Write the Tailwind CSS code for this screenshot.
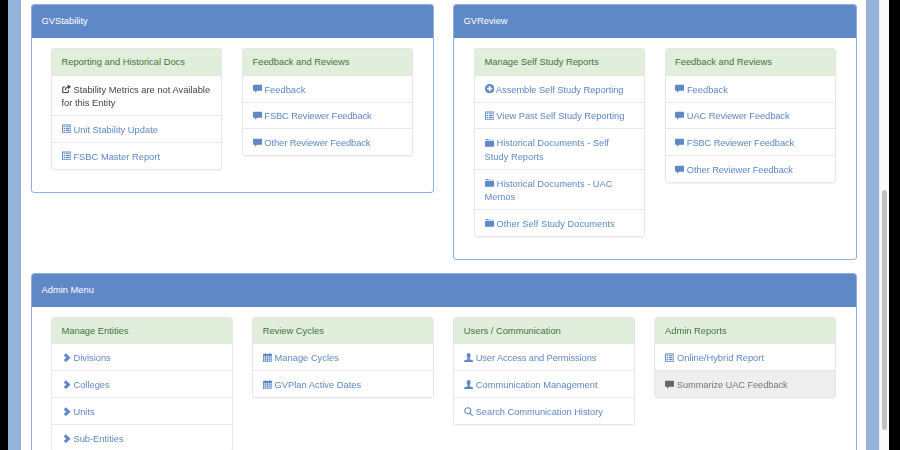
<!DOCTYPE html>
<html><head><meta charset="utf-8"><script src="https://cdn.jsdelivr.net/npm/@tailwindcss/browser@4"></script></head>
<body class="m-0 overflow-hidden bg-white">
<svg class="hidden"><defs>
<symbol id="list" viewBox="0 0 10 10"><path fill-rule="evenodd" d="M0.6 0.5H9.4Q10 0.5 10 1.1V8.9Q10 9.5 9.4 9.5H0.6Q0 9.5 0 8.9V1.1Q0 .5 .6 .5ZM1 1.5V8.5H9V1.5ZM1.8 2.3H3.2V3.5H1.8ZM4 2.3H8.2V3.5H4ZM1.8 4.4H3.2V5.6H1.8ZM4 4.4H8.2V5.6H4ZM1.8 6.5H3.2V7.7H1.8ZM4 6.5H8.2V7.7H4Z"/></symbol>
<symbol id="comment" viewBox="0 0 10 10"><path d="M1 .8H9Q10 .8 10 1.8V6.3Q10 7.3 9 7.3H4.5L2.2 9.4V7.3H1Q0 7.3 0 6.3V1.8Q0 .8 1 .8Z"/></symbol>
<symbol id="plus" viewBox="0 0 10 10"><path fill-rule="evenodd" d="M5 0A5 5 0 1 1 5 10A5 5 0 1 1 5 0ZM4.1 2.2V4.1H2.2V5.9H4.1V7.8H5.9V5.9H7.8V4.1H5.9V2.2Z"/></symbol>
<symbol id="folder" viewBox="0 0 10 10"><path d="M0 3.2H10V8.8Q10 9.4 9.4 9.4H.6Q0 9.4 0 8.8ZM.5 2.5V1.6Q.5 1 1.1 1H3.4L4 1.8H8.9Q9.5 1.8 9.5 2.3V2.5Z"/></symbol>
<symbol id="chev" viewBox="0 0 10 10"><path d="M4.2 .3L9.2 5L4.2 9.7L1.8 7.4L4.6 5L1.8 2.6Z"/></symbol>
<symbol id="cal" viewBox="0 0 10 10"><path fill-rule="evenodd" d="M2 0H3.2V1.2H6.8V0H8V1.2H10V9.8H0V1.2H2ZM.8 3.4V4.9H2.2V3.4ZM3 3.4V4.9H4.6V3.4ZM5.4 3.4V4.9H7V3.4ZM7.8 3.4V4.9H9.2V3.4ZM.8 5.6V7H2.2V5.6ZM3 5.6V7H4.6V5.6ZM5.4 5.6V7H7V5.6ZM7.8 5.6V7H9.2V5.6ZM.8 7.7V9.1H2.2V7.7ZM3 7.7V9.1H4.6V7.7ZM5.4 7.7V9.1H7V7.7ZM7.8 7.7V9.1H9.2V7.7Z"/></symbol>
<symbol id="user" viewBox="0 0 10 10"><path d="M5 0C6.4 0 7.1 1.2 7.1 2.8C7.1 4 6.6 5 6.1 5.5V6.6L9.6 8Q10 8.2 10 8.8V9.8H0V8.8Q0 8.2 .4 8L3.9 6.6V5.5C3.4 5 2.9 4 2.9 2.8C2.9 1.2 3.6 0 5 0Z"/></symbol>
<symbol id="search" viewBox="0 0 10 10"><path fill="none" stroke="currentColor" stroke-width="1.2" d="M4 .8A3.2 3.2 0 1 1 4 7.2A3.2 3.2 0 1 1 4 .8ZM6.3 6.3L9.4 9.4"/></symbol>
<symbol id="ext" viewBox="0 0 10 10"><path fill="none" stroke="currentColor" stroke-width="1.2" d="M6.8 6.5V8.2Q6.8 9.2 5.8 9.2H1.8Q.8 9.2 .8 8.2V4.2Q.8 3.2 1.8 3.2H3.2M3.6 6.6C3.8 4.6 5 3.2 7 3"/><path d="M6.2.6L9.8 3L6.2 5.6Z"/></symbol>
</defs></svg>
<div class="flex h-[450px] w-[900px] overflow-hidden font-['Liberation_Sans',sans-serif] text-[9.33px] leading-[13.33px] text-[#444] blur-[0.35px]">
  <div class="w-2 shrink-0 bg-black"></div>
  <div class="w-[13px] shrink-0 bg-[#96b3db]"></div>
  <main class="flex w-[845px] shrink-0 flex-col gap-[13px] px-[10px] pt-1">
    <div class="flex items-start gap-[19px]">
      <section class="h-[188.67px] w-[403px] shrink-0 overflow-hidden rounded-[3px] border border-[#8fb0e0]">
        <h2 class="flex h-[33.3px] items-center bg-[#5f88c6] px-[9.5px] pt-[1px] text-[9.33px] font-normal text-white">GVStability</h2>
        <div class="flex items-start gap-[20px] px-[19px] pt-[9.7px]">
          <div class="w-[171px] shrink-0 overflow-hidden rounded-[3px] border border-[#e6e6e6] shadow-[0_1px_1px_rgba(0,0,0,0.05)]">
            <h3 class="flex h-[26.67px] items-center bg-[#e1eedb] px-[9.5px] pt-[1.5px] font-normal text-[#3f7441]">Reporting and Historical Docs</h3>
            <ul>
              <li class="bg-white px-[9.5px] pt-[7.9px] pb-[4.7px]"><svg class="inline-block h-[9.33px] w-[9.33px] fill-[#444] align-[-1px] text-[#444]"><use href="#ext"/></svg> Stability Metrics are not Available for this Entity</li>
              <li class="border-t border-[#e6e6e6] px-[9.5px] pt-[7.9px] pb-[4.7px] text-[#5f88c6]"><svg class="inline-block h-[9.33px] w-[9.33px] fill-[#5f88c6] align-[-1px]"><use href="#list"/></svg> Unit Stability Update</li>
              <li class="border-t border-[#e6e6e6] px-[9.5px] pt-[7.9px] pb-[4.7px] text-[#5f88c6]"><svg class="inline-block h-[9.33px] w-[9.33px] fill-[#5f88c6] align-[-1px]"><use href="#list"/></svg> FSBC Master Report</li>
            </ul>
          </div>
          <div class="w-[171px] shrink-0 overflow-hidden rounded-[3px] border border-[#e6e6e6] shadow-[0_1px_1px_rgba(0,0,0,0.05)]">
            <h3 class="flex h-[26.67px] items-center bg-[#e1eedb] px-[9.5px] pt-[1.5px] font-normal text-[#3f7441]">Feedback and Reviews</h3>
            <ul class="text-[#5f88c6]">
              <li class="px-[9.5px] pt-[7.9px] pb-[4.7px]"><svg class="inline-block h-[9.33px] w-[9.33px] fill-[#5f88c6] align-[-1px]"><use href="#comment"/></svg> Feedback</li>
              <li class="border-t border-[#e6e6e6] px-[9.5px] pt-[7.9px] pb-[4.7px] tracking-[-0.12px]"><svg class="inline-block h-[9.33px] w-[9.33px] fill-[#5f88c6] align-[-1px]"><use href="#comment"/></svg> FSBC Reviewer Feedback</li>
              <li class="border-t border-[#e6e6e6] px-[9.5px] pt-[7.9px] pb-[4.7px] tracking-[-0.1px]"><svg class="inline-block h-[9.33px] w-[9.33px] fill-[#5f88c6] align-[-1px]"><use href="#comment"/></svg> Other Reviewer Feedback</li>
            </ul>
          </div>
        </div>
      </section>
      <section class="h-[255.67px] w-[403.5px] shrink-0 overflow-hidden rounded-[3px] border border-[#8fb0e0]">
        <h2 class="flex h-[33.3px] items-center bg-[#5f88c6] px-[9.5px] pt-[1px] text-[9.33px] font-normal text-white">GVReview</h2>
        <div class="flex items-start gap-[19.5px] px-[20px] pt-[9.7px]">
          <div class="w-[171px] shrink-0 overflow-hidden rounded-[3px] border border-[#e6e6e6] shadow-[0_1px_1px_rgba(0,0,0,0.05)]">
            <h3 class="flex h-[26.67px] items-center bg-[#e1eedb] px-[9.5px] pt-[1.5px] font-normal text-[#3f7441]">Manage Self Study Reports</h3>
            <ul class="text-[#5f88c6]">
              <li class="px-[9.5px] pt-[7.9px] pb-[4.7px] tracking-[-0.05px]"><svg class="inline-block h-[9.33px] w-[9.33px] fill-[#5f88c6] align-[-1px]"><use href="#plus"/></svg> Assemble Self Study Reporting</li>
              <li class="border-t border-[#e6e6e6] px-[9.5px] pt-[7.9px] pb-[4.7px] tracking-[-0.05px]"><svg class="inline-block h-[9.33px] w-[9.33px] fill-[#5f88c6] align-[-1px]"><use href="#list"/></svg> View Past Self Study Reporting</li>
              <li class="border-t border-[#e6e6e6] px-[9.5px] pt-[7.9px] pb-[4.7px]"><svg class="inline-block h-[9.33px] w-[9.33px] fill-[#5f88c6] align-[-1px]"><use href="#folder"/></svg> Historical Documents - Self Study Reports</li>
              <li class="border-t border-[#e6e6e6] px-[9.5px] pt-[7.9px] pb-[4.7px]"><svg class="inline-block h-[9.33px] w-[9.33px] fill-[#5f88c6] align-[-1px]"><use href="#folder"/></svg> Historical Documents - UAC Memos</li>
              <li class="border-t border-[#e6e6e6] px-[9.5px] pt-[7.9px] pb-[4.7px]"><svg class="inline-block h-[9.33px] w-[9.33px] fill-[#5f88c6] align-[-1px]"><use href="#folder"/></svg> Other Self Study Documents</li>
            </ul>
          </div>
          <div class="w-[171px] shrink-0 overflow-hidden rounded-[3px] border border-[#e6e6e6] shadow-[0_1px_1px_rgba(0,0,0,0.05)]">
            <h3 class="flex h-[26.67px] items-center bg-[#e1eedb] px-[9.5px] pt-[1.5px] font-normal text-[#3f7441]">Feedback and Reviews</h3>
            <ul class="text-[#5f88c6]">
              <li class="px-[9.5px] pt-[7.9px] pb-[4.7px]"><svg class="inline-block h-[9.33px] w-[9.33px] fill-[#5f88c6] align-[-1px]"><use href="#comment"/></svg> Feedback</li>
              <li class="border-t border-[#e6e6e6] px-[9.5px] pt-[7.9px] pb-[4.7px] tracking-[-0.1px]"><svg class="inline-block h-[9.33px] w-[9.33px] fill-[#5f88c6] align-[-1px]"><use href="#comment"/></svg> UAC Reviewer Feedback</li>
              <li class="border-t border-[#e6e6e6] px-[9.5px] pt-[7.9px] pb-[4.7px] tracking-[-0.12px]"><svg class="inline-block h-[9.33px] w-[9.33px] fill-[#5f88c6] align-[-1px]"><use href="#comment"/></svg> FSBC Reviewer Feedback</li>
              <li class="border-t border-[#e6e6e6] px-[9.5px] pt-[7.9px] pb-[4.7px] tracking-[-0.1px]"><svg class="inline-block h-[9.33px] w-[9.33px] fill-[#5f88c6] align-[-1px]"><use href="#comment"/></svg> Other Reviewer Feedback</li>
            </ul>
          </div>
        </div>
      </section>
    </div>
    <section class="h-[260px] w-[825.5px] shrink-0 overflow-hidden rounded-[3px] border border-[#8fb0e0]">
      <h2 class="flex h-[33.3px] items-center bg-[#5f88c6] px-[9.5px] pt-[1px] text-[9.33px] font-normal text-white">Admin Menu</h2>
      <div class="flex items-start gap-[19.67px] px-[19px] pt-[9.7px]">
        <div class="w-[181.5px] shrink-0 overflow-hidden rounded-[3px] border border-[#e6e6e6]">
          <h3 class="flex h-[26.67px] items-center bg-[#e1eedb] px-[9.5px] pt-[1.5px] font-normal text-[#3f7441]">Manage Entities</h3>
          <ul class="text-[#5f88c6]">
            <li class="px-[9.5px] pt-[7.9px] pb-[4.7px]"><svg class="inline-block h-[9.33px] w-[9.33px] fill-[#5f88c6] align-[-1px]"><use href="#chev"/></svg> Divisions</li>
            <li class="border-t border-[#e6e6e6] px-[9.5px] pt-[7.9px] pb-[4.7px]"><svg class="inline-block h-[9.33px] w-[9.33px] fill-[#5f88c6] align-[-1px]"><use href="#chev"/></svg> Colleges</li>
            <li class="border-t border-[#e6e6e6] px-[9.5px] pt-[7.9px] pb-[4.7px]"><svg class="inline-block h-[9.33px] w-[9.33px] fill-[#5f88c6] align-[-1px]"><use href="#chev"/></svg> Units</li>
            <li class="border-t border-[#e6e6e6] px-[9.5px] pt-[7.9px] pb-[4.7px]"><svg class="inline-block h-[9.33px] w-[9.33px] fill-[#5f88c6] align-[-1px]"><use href="#chev"/></svg> Sub-Entities</li>
          </ul>
        </div>
        <div class="w-[181.5px] shrink-0 overflow-hidden rounded-[3px] border border-[#e6e6e6] shadow-[0_1px_1px_rgba(0,0,0,0.05)]">
          <h3 class="flex h-[26.67px] items-center bg-[#e1eedb] px-[9.5px] pt-[1.5px] font-normal text-[#3f7441]">Review Cycles</h3>
          <ul class="text-[#5f88c6]">
            <li class="px-[9.5px] pt-[7.9px] pb-[4.7px]"><svg class="inline-block h-[9.33px] w-[9.33px] fill-[#5f88c6] align-[-1px]"><use href="#cal"/></svg> Manage Cycles</li>
            <li class="border-t border-[#e6e6e6] px-[9.5px] pt-[7.9px] pb-[4.7px]"><svg class="inline-block h-[9.33px] w-[9.33px] fill-[#5f88c6] align-[-1px]"><use href="#cal"/></svg> GVPlan Active Dates</li>
          </ul>
        </div>
        <div class="w-[181.5px] shrink-0 overflow-hidden rounded-[3px] border border-[#e6e6e6] shadow-[0_1px_1px_rgba(0,0,0,0.05)]">
          <h3 class="flex h-[26.67px] items-center bg-[#e1eedb] px-[9.5px] pt-[1.5px] font-normal text-[#3f7441]">Users / Communication</h3>
          <ul class="text-[#5f88c6]">
            <li class="px-[9.5px] pt-[7.9px] pb-[4.7px] tracking-[-0.1px]"><svg class="inline-block h-[9.33px] w-[9.33px] fill-[#5f88c6] align-[-1px]"><use href="#user"/></svg> User Access and Permissions</li>
            <li class="border-t border-[#e6e6e6] px-[9.5px] pt-[7.9px] pb-[4.7px]"><svg class="inline-block h-[9.33px] w-[9.33px] fill-[#5f88c6] align-[-1px]"><use href="#user"/></svg> Communication Management</li>
            <li class="border-t border-[#e6e6e6] px-[9.5px] pt-[7.9px] pb-[4.7px] tracking-[-0.05px]"><svg class="inline-block h-[9.33px] w-[9.33px] fill-none align-[-1px]"><use href="#search"/></svg> Search Communication History</li>
          </ul>
        </div>
        <div class="w-[181.5px] shrink-0 overflow-hidden rounded-[3px] border border-[#e6e6e6] shadow-[0_1px_1px_rgba(0,0,0,0.05)]">
          <h3 class="flex h-[26.67px] items-center bg-[#e1eedb] px-[9.5px] pt-[1.5px] font-normal text-[#3f7441]">Admin Reports</h3>
          <ul>
            <li class="px-[9.5px] pt-[7.9px] pb-[4.7px] text-[#5f88c6]"><svg class="inline-block h-[9.33px] w-[9.33px] fill-[#5f88c6] align-[-1px]"><use href="#list"/></svg> Online/Hybrid Report</li>
            <li class="border-t border-[#e6e6e6] bg-[#eeeeee] px-[9.5px] pt-[7.9px] pb-[4.7px] tracking-[-0.1px] text-[#777]"><svg class="inline-block h-[9.33px] w-[9.33px] fill-[#666] align-[-1px]"><use href="#comment"/></svg> Summarize UAC Feedback</li>
          </ul>
        </div>
      </div>
    </section>
  </main>
  <div class="w-[13px] shrink-0 bg-[#96b3db]"></div>
  <div class="relative w-[10px] shrink-0 border-l border-[#ececec] bg-[#fafafa]">
    <div class="absolute left-[2px] top-[190px] h-[240px] w-[5px] rounded-full bg-[#c2c2c2]"></div>
  </div>
  <div class="flex-1 bg-black"></div>
</div>
</body></html>
